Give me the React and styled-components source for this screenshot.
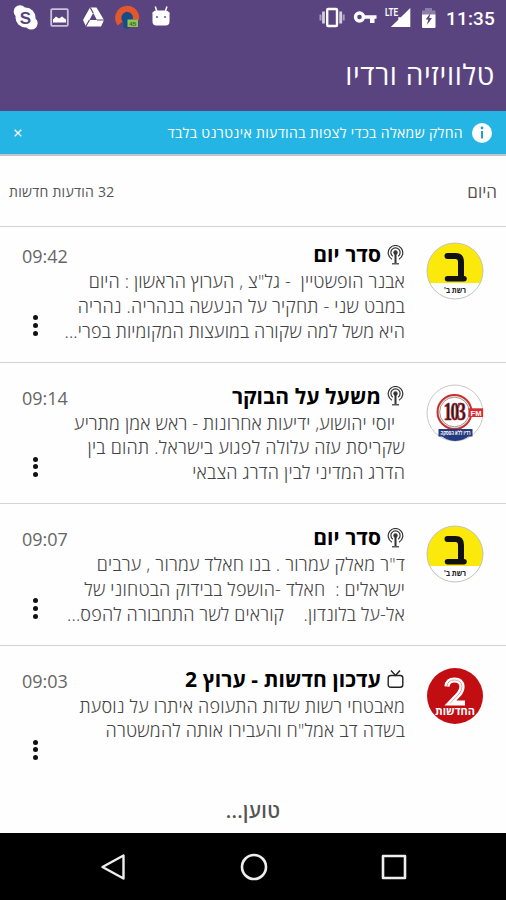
import React from 'react'
import styled, { createGlobalStyle } from "styled-components";

const rows = [
    {
        time: '09:42', kind: 'radio', logo: 'bet', title: 'סדר יום',
        lines: [
            { text: 'אבנר הופשטיין  - גל"צ , הערוץ הראשון : היום', spacing: 0.15 },
            { text: 'במבט שני - תחקיר על הנעשה בנהריה. נהריה', spacing: 0.2 },
            { text: 'היא משל למה שקורה במועצות המקומיות בפרי...', spacing: 0.14 },
        ],
    },
    {
        time: '09:14', kind: 'radio', logo: 'fm', title: 'משעל על הבוקר',
        lines: [
            { text: '  יוסי יהושוע, ידיעות אחרונות - ראש אמן מתריע', spacing: 0.16 },
            { text: 'שקריסת עזה עלולה לפגוע בישראל. תהום בין', spacing: 0.27 },
            { text: 'הדרג המדיני לבין הדרג הצבאי', spacing: 0.2 },
        ],
    },
    {
        time: '09:07', kind: 'radio', logo: 'bet', title: 'סדר יום',
        lines: [
            { text: 'ד"ר מאלק עמרור . בנו חאלד עמרור , ערבים', spacing: 0.23 },
            { text: 'ישראלים :  חאלד -הושפל בבידוק הבטחוני של', spacing: 0.2 },
            { text: 'אל-על בלונדון.    קוראים לשר התחבורה להפס...', spacing: 0.16 },
        ],
    },
    {
        time: '09:03', kind: 'tv', logo: 'news', title: 'עדכון חדשות - ערוץ 2',
        lines: [
            { text: 'מאבטחי רשות שדות התעופה איתרו על נוסעת', spacing: 0.2 },
            { text: 'בשדה דב אמל"ח והעבירו אותה להמשטרה', spacing: 0.2 },
        ],
    },
]

function StatusIcons() {
    return (
        <svg width="160" height="34" viewBox="12 0 160 34">
            <circle cx="25.5" cy="17.5" r="10" fill="#fff" />
            <circle cx="20" cy="11.5" r="6.3" fill="#fff" />
            <circle cx="31.3" cy="23.2" r="6.3" fill="#fff" />
            <text x="25.5" y="23.5" textAnchor="middle" fontFamily="Liberation Sans" fontSize="17" fontWeight="700" fill="#5a4480">S</text>
            <rect x="51.2" y="9.2" width="16.6" height="16.6" rx="1" fill="none" stroke="#c9c1d8" strokeWidth="1.8" />
            <path d="M53 22.500v-3l3-3 3 2 3-2 4 3v3z" fill="#fff" />
            <path d="M90 7.500h6.500l7.500 12.500-3 6.500H86l-3-6.500z" fill="#fff" />
            <path d="M93.200 13l3.800 7h-7.600z" fill="#5a4480" />
            <path d="M89.400 20l-3.600 6.500M93.200 13l-3-5.500M97 20h7" stroke="#5a4480" strokeWidth="1.200" />
            <circle cx="127" cy="17.500" r="5.500" fill="#164c86" />
            <rect x="123.500" y="18" width="6.500" height="10.500" rx="2" fill="#164c86" />
            <path d="M120.200 23.500A9 9 0 1 1 136 19.500" fill="none" stroke="#e2572b" strokeWidth="6" />
            <rect x="127.500" y="19.500" width="10.500" height="7.500" fill="#8fc453" />
            <text x="132.700" y="25.500" textAnchor="middle" fontFamily="Liberation Sans" fontSize="6" fontWeight="700" fill="#33691e">45</text>
            <path d="M152.500 12.500h17v9q0 4-4 4h-9q-4 0-4-4z" fill="#fff" />
            <path d="M152.500 14q0-3.500 4-3.500h9q4 .5 4 3.500z" fill="#fff" />
            <path d="M156.700 11l-1.400-4.500M165.500 11l1.400-4.500" stroke="#fff" strokeWidth="1.500" />
            <circle cx="157" cy="17" r=".9" fill="#5a4480" />
            <circle cx="165" cy="17" r=".9" fill="#5a4480" />
        </svg>
    )
}

function SignalIcons() {
    return (
        <svg width="122" height="34" viewBox="318 0 122 34">
            <rect x="327.200" y="9" width="9.800" height="17" rx="1" fill="none" stroke="#fff" strokeWidth="2.400" />
            <path d="M323.500 11.500v12M340.700 11.500v12" stroke="#d5cee1" strokeWidth="2.800" />
            <path d="M320.500 14.500v6M343.700 14.500v6" stroke="#a99dbe" strokeWidth="2" />
            <circle cx="359.500" cy="17" r="4" fill="none" stroke="#fff" strokeWidth="3.400" />
            <path d="M364 15.200h12.500v3.500h-2v4.300h-4.500v-4.300h-6z" fill="#fff" />
            <text x="385" y="16" fontFamily="Roboto" fontSize="11" fontWeight="600" fill="#fff" textLength="13" lengthAdjust="spacingAndGlyphs">LTE</text>
            <path d="M410.300 8v19h-19.500l7.500-7.300v-2.500h2.500z" fill="#fff" />
            <path d="M422 10.500h3V8h7v2.500h3.500V15H422z" fill="#8d7da9" />
            <path d="M422 14.500h13.500V27q0 1-1 1H423q-1 0-1-1z" fill="#fff" />
            <path d="M430.500 13l-4.800 6.500h2.600l-1.500 5.500 5.200-7h-2.800z" fill="#5a4480" />
        </svg>
    )
}

function Logo({ kind }) {
    if (kind === 'bet') {
        return (
            <svg width="58" height="58" viewBox="0 0 58 58">
                <circle cx="29" cy="29" r="28" fill="#fff" />
                <path d="M3.700 41a28 28 0 1 1 50.600 0z" fill="#fbe90b" />
                <circle cx="29" cy="29" r="28" fill="none" stroke="#c3c3b9" />
                <path d="M21.500 14h8q5.500 0 5.500 6V36" fill="none" stroke="#111" strokeWidth="6" strokeLinejoin="round" strokeLinecap="round" />
                <path d="M21.500 36.700h16.500" stroke="#111" strokeWidth="5.500" strokeLinecap="round" />
                <text x="29" y="50.500" textAnchor="middle" fontFamily="Open Sans, DejaVu Sans, sans-serif" fontSize="8" fontWeight="700" fill="#222" direction="rtl" textLength="22" lengthAdjust="spacingAndGlyphs">רשת ב'</text>
            </svg>
        )
    }
    if (kind === 'fm') {
        return (
            <svg width="58" height="58" viewBox="0 0 58 58">
                <circle cx="29" cy="29" r="28" fill="#fff" stroke="#c8c8c8" />
                <path d="M15.500 52h27.500q-5 4.500-14 5-8.500-.5-13.500-5z" fill="#253b80" />
                <circle cx="28.500" cy="28" r="17" fill="#f1ebeb" stroke="#c9302f" strokeWidth="2" />
                <circle cx="28.500" cy="28" r="14.800" fill="#fff" stroke="#999" strokeWidth="1" />
                <path d="M12.500 45h34v7.500h-34z" fill="#253b80" />
                <text x="29.500" y="50.500" textAnchor="middle" fontFamily="Open Sans, DejaVu Sans, sans-serif" fontSize="5.500" fontWeight="700" fill="#fff" textLength="30" lengthAdjust="spacingAndGlyphs">רדיו ללא הפסקה</text>
                <rect x="42.500" y="24.300" width="14.500" height="8.700" fill="#d92b31" />
                <text x="50" y="31.500" textAnchor="middle" fontFamily="Liberation Sans" fontSize="7.500" fontWeight="700" fill="#fff">FM</text>
                <g transform="translate(28.700 36) scale(.82 1.200)">
                    <text textAnchor="middle" fontFamily="Liberation Serif" fontSize="21" letterSpacing="-2" x="-1" fontWeight="700" fill="#2b1a1c" stroke="#b91e2a" strokeWidth=".6">103</text>
                </g>
            </svg>
        )
    }
    return (
        <svg width="58" height="58" viewBox="0 0 58 58">
            <circle cx="29" cy="29" r="28" fill="#c20d12" />
            <path d="M21 19.500q.5-6.500 7.500-6.500t7.500 6.500q0 4-3 7.500l-8.500 9H39" fill="none" stroke="#fff" strokeWidth="5.200" />
            <path d="M21 19.500q.5-6.500 7.500-6.500t7.500 6.500q0 4-3 7.500l-9 9.500" fill="none" stroke="#d9777a" strokeWidth=".7" />
            <text x="29" y="47.500" textAnchor="middle" fontFamily="Open Sans, DejaVu Sans, sans-serif" fontSize="11" fontWeight="700" fill="#fff" textLength="40" lengthAdjust="spacingAndGlyphs">החדשות</text>
        </svg>
    )
}

function KindIcon({ kind }) {
    if (kind === 'tv') {
        return (
            <svg width="17" height="20" viewBox="0 0 17 20" fill="none" stroke="#222" strokeWidth="1.400">
                <rect x="1.200" y="6.500" width="14.600" height="11.800" rx="2.500" />
                <path d="M4 1.500l4.500 5 4.500-5" />
            </svg>
        )
    }
    return (
        <svg width="17" height="20" viewBox="0 0 17 20" fill="none" stroke="#333" strokeWidth="1.200">
            <path d="M5 14.200a7.300 7.300 0 1 1 7 0" />
            <path d="M5.800 11.200a4.600 4.600 0 1 1 5.400 0" />
            <circle cx="8.500" cy="7.500" r="1.600" fill="#333" />
            <path d="M8.500 8v10" strokeWidth="2" />
            <path d="M5 18.800h7" />
        </svg>
    )
}

function NewsRow({ item, first }) {
    return (
        <Row $first={first}>
            <Logo kind={item.logo} />
            <Content>
                <Title>
                    <KindIcon kind={item.kind} />
                    <h2>{item.title}</h2>
                </Title>
                {item.lines.map((line) => (
                    <Line key={line.text} $spacing={line.spacing}>{line.text}</Line>
                ))}
            </Content>
            <Side>
                <Time>{item.time}</Time>
                <Dots><i /><i /><i /></Dots>
            </Side>
        </Row>
    )
}

function App() {
    return (
        <Screen>
            <GlobalStyle />
            <Header>
                <StatusBar>
                    <StatusIcons />
                    <StatusGroup>
                        <SignalIcons />
                        <Clock>11:35</Clock>
                    </StatusGroup>
                </StatusBar>
                <AppTitle>טלוויזיה ורדיו</AppTitle>
            </Header>
            <Banner>
                <Info>
                    <svg width="20" height="20" viewBox="0 0 20 20">
                        <circle cx="10" cy="10" r="10" fill="#fff" />
                        <circle cx="10" cy="5" r="1.400" fill="#1f9fd0" />
                        <path d="M10 8v7.500" stroke="#1f9fd0" strokeWidth="2" />
                    </svg>
                    <span>החלק שמאלה בכדי לצפות בהודעות אינטרנט בלבד</span>
                </Info>
                <svg width="8" height="8" viewBox="0 0 8 8" stroke="#fff" strokeWidth="1.300">
                    <path d="M.7.7l6.600 6.600M7.300.7L.7 7.300" />
                </svg>
            </Banner>
            <DayBar>
                <Day>היום</Day>
                <Count>32 הודעות חדשות</Count>
            </DayBar>
            <List>
                {rows.map((item, i) => (
                    <NewsRow key={item.time} item={item} first={i === 0} />
                ))}
                <Loading>טוען...</Loading>
            </List>
            <NavBar>
                <svg width="26" height="28" viewBox="0 0 26 28" fill="none" stroke="#eee" strokeWidth="2.400" strokeLinejoin="round">
                    <path d="M23.500 2.500v23L2.500 14z" />
                </svg>
                <svg width="28" height="28" viewBox="0 0 28 28" fill="none" stroke="#eee" strokeWidth="2.600">
                    <circle cx="14" cy="14" r="12" />
                </svg>
                <svg width="26" height="26" viewBox="0 0 26 26" fill="none" stroke="#eee" strokeWidth="2.600" strokeLinejoin="round">
                    <rect x="2" y="2" width="22" height="22" />
                </svg>
            </NavBar>
        </Screen>
    )
}

export default App

const GlobalStyle = createGlobalStyle`
 body {
    margin: 0;
    background: #fff;
 }
 * {
    box-sizing: border-box;
 }
 svg {
    display: block;
    flex: none;
 }
`

const Screen = styled.div`
 width: 506px;
 height: 900px;
 display: flex;
 flex-direction: column;
 overflow: hidden;
 direction: rtl;
 background: #fefefe;
 font-family: 'Open Sans', 'DejaVu Sans', sans-serif;
`

const Header = styled.header`
 height: 111px;
 flex: none;
 background: #5a4480;
 color: #fff;
`

const StatusBar = styled.div`
 height: 34px;
 display: flex;
 direction: ltr;
 justify-content: space-between;
 padding: 0 11px 0 12px;
`

const StatusGroup = styled.div`
 display: flex;
 align-items: center;
 gap: 6px;
`

const Clock = styled.span`
 font-family: Roboto, sans-serif;
 font-size: 19px;
 font-weight: 500;
 padding-top: 2px;
 width: 49px;
 letter-spacing: 0.15px;
`

const AppTitle = styled.h1`
 margin: 0;
 padding: 20px 11px 0;
 font-size: 28px;
 line-height: 40px;
 font-weight: 400;
 letter-spacing: 0.7px;
`

const Banner = styled.div`
 height: 45px;
 flex: none;
 display: flex;
 align-items: center;
 justify-content: space-between;
 padding: 0 14px;
 background: #24b5e5;
 border-bottom: 2px solid #c5c3cc;
 color: #fff;
`

const Info = styled.div`
 display: flex;
 align-items: center;
 gap: 9px;
 font-size: 14px;
 font-weight: 500;
 letter-spacing: 0.35px;
`

const DayBar = styled.div`
 height: 71px;
 flex: none;
 display: flex;
 align-items: center;
 justify-content: space-between;
 padding: 0 9px;
 border-bottom: 1px solid #d4d4d4;
 color: #555;
`

const Day = styled.span`
 font-size: 17px;
`

const Count = styled.span`
 font-size: 14px;
 letter-spacing: 0.27px;
`

const List = styled.main`
 height: 606px;
 flex: none;
`

const Row = styled.article`
 height: ${props => props.$first ? '135.5px' : '141.5px'};
 display: flex;
 padding: ${props => props.$first ? '15.4px' : '21.4px'} 22px 0;
 border-bottom: 1px solid #d4d4d4;
 &:nth-child(4){
     border-bottom: none;
 }
`

const Content = styled.div`
 width: 345px;
 padding-right: 21px;
`

const Title = styled.div`
 display: flex;
 align-items: flex-start;
 gap: 6px;
 height: 27px;
 padding-right: 1px;
 svg{
     margin-top: 2.5px;
 }
 h2{
     margin: -1px 0 0;
     font-size: 21px;
     line-height: 27px;
     font-weight: 700;
     color: #000;
     letter-spacing: 0.07px;
 }
`

const Line = styled.div`
 font-size: 18px;
 line-height: 24.6px;
 font-weight: 300;
 color: #444;
 white-space: pre;
 letter-spacing: ${props => props.$spacing || 0}px;
`

const Side = styled.div`
 flex: 1;
 display: flex;
 flex-direction: column;
 align-items: flex-end;
`

const Time = styled.span`
 font-size: 18px;
 line-height: 29px;
 font-weight: 400;
 color: #666;
`

const Dots = styled.div`
 display: flex;
 flex-direction: column;
 gap: 2.6px;
 margin: 44px 0 0 11px;
 i{
     width: 5px;
     height: 5px;
     border-radius: 50%;
     background: #111;
 }
`

const Loading = styled.div`
 padding-top: 10px;
 text-align: center;
 font-size: 20px;
 line-height: 28px;
 font-weight: 600;
 color: #555;
 letter-spacing: 0.3px;
`

const NavBar = styled.nav`
 flex: 1;
 display: flex;
 direction: ltr;
 align-items: center;
 justify-content: space-between;
 padding: 0 99px 0 100px;
 background: #000;
`
